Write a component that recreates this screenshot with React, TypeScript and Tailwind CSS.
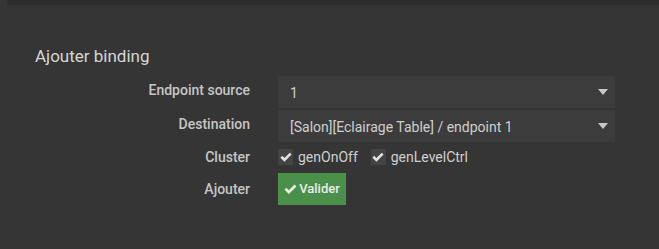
import { useState } from "react";

const Check = ({ className }: { className?: string }) => (
  <svg viewBox="0 0 14 12" className={className} fill="currentColor">
    <path d="M0.5 6.2L2.6 4.1L5.2 6.7L11.4 0.5L13.5 2.6L5.2 10.9Z" />
  </svg>
);

const Caret = () => (
  <svg viewBox="0 0 10 6" className="w-[10px] h-[6px] text-[#c8c8c8]" fill="currentColor">
    <path d="M0 0h10L5 6z" />
  </svg>
);

const Row = ({ label, raised, children }: { label: string; raised?: boolean; children: React.ReactNode }) => (
  <div className="flex items-center">
    <div className={`w-[251px] pr-[1px] text-right text-[14px] leading-[16px] font-medium text-[#c6c6c6] ${raised ? "pb-[4px]" : ""}`}>
      {label}
    </div>
    <div className="ml-[27px] flex-1">{children}</div>
  </div>
);

const Select = ({ value }: { value: string }) => (
  <div className="flex h-[32px] w-[337px] items-center justify-between bg-[#3c3c3c] pl-[12px] pr-[7px] text-[14px] text-[#cfcfcf]">
    <span className="pt-[2px]">{value}</span>
    <Caret />
  </div>
);

export default function App() {
  const [clusters, setClusters] = useState({ genOnOff: true, genLevelCtrl: true });

  return (
    <div className="h-[249px] w-[659px] bg-[#353535] font-['Roboto',sans-serif]">
      <div className="ml-[7px] h-[5px] bg-[#2e2e2e]" />
      <h3 className="ml-[35px] mt-[39px] text-[17px] leading-[24px] text-[#d6d6d6]">Ajouter binding</h3>
      <div className="mt-[8px] flex flex-col">
        <Row label="Endpoint source" raised>
          <Select value="1" />
        </Row>
        <div className="h-[2px]" />
        <Row label="Destination" raised>
          <Select value="[Salon][Eclairage Table] / endpoint 1" />
        </Row>
        <div className="h-[7px]" />
        <Row label="Cluster">
          <div className="flex h-[16px] items-center gap-[13px] text-[14px] text-[#cfcfcf]">
            {(Object.keys(clusters) as (keyof typeof clusters)[]).map((k) => (
              <label key={k} className="flex items-center gap-[5px]" onClick={() => setClusters({ ...clusters, [k]: !clusters[k] })}>
                <span className="flex h-[16px] w-[15px] items-center justify-center bg-[#444444] text-[#e2e2e2]">
                  {clusters[k] && <Check className="w-[12px] h-[11px]" />}
                </span>
                {k}
              </label>
            ))}
          </div>
        </Row>
        <div className="h-[8px]" />
        <Row label="Ajouter">
          <button className="flex h-[32px] w-[68px] items-center justify-center gap-[2px] bg-[#4a8f4a] text-[13px] font-medium text-[#ececec]">
            <Check className="w-[13px] h-[11px]" />
            Valider
          </button>
        </Row>
      </div>
    </div>
  );
}
